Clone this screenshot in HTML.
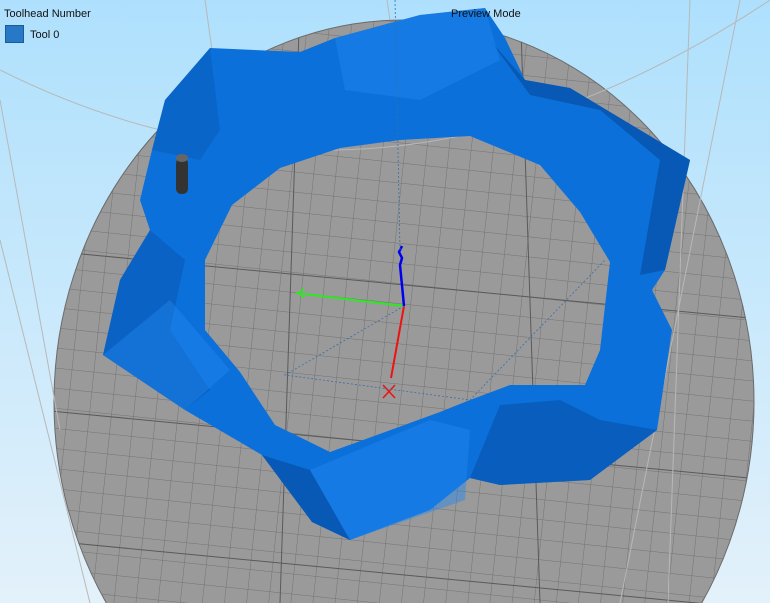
<!DOCTYPE html>
<html><head><style>
html,body{margin:0;padding:0;width:770px;height:603px;overflow:hidden}
body{background:linear-gradient(#aee0fd,#e3f1fa);font-family:"Liberation Sans",sans-serif;position:relative}
svg{display:block}
.t{position:absolute;font-size:11px;color:#111}
</style></head><body>
<svg width="770" height="603" style="position:absolute;left:0;top:0">
<defs>
<clipPath id="d"><ellipse cx="404" cy="402" rx="350" ry="382"/></clipPath>
<pattern id="g" width="22" height="20" patternUnits="userSpaceOnUse" patternTransform="rotate(6)">
<rect width="22" height="20" fill="#9a9a9a"/><path d="M0 0H22M0 0V20" stroke="#737373" stroke-width="1"/></pattern>
</defs>
<ellipse cx="404" cy="402" rx="350" ry="382" fill="url(#g)" stroke="#6a6a6a"/>
<g clip-path="url(#d)" stroke="#5a5a5a" stroke-width="1">
<path d="M40 250L770 320M40 410L770 480M40 540L770 610M300 0L280 603M520 0L540 603"/>
</g>
<g stroke="#b8b8b8" fill="none" stroke-width="1">
<path d="M0 70 Q380 260 770 0"/>
<path d="M205 0L212 50M387 0L390 20M690 0L668 603M740 0L620 603M0 240L90 603M0 100L60 430"/>
</g>
<path fill="#0c70da" fill-rule="evenodd" d="M165 100L210 48L300 52L335 38L420 15L485 8L505 38L525 80L570 88L690 160L665 270L652 290L672 330L657 430L590 480L500 485L470 478L430 510L350 540L312 522L262 455L185 410L103 355L120 280L150 230L140 200L152 150Z M232 205L280 168L340 148L400 140L470 136L540 165L580 212L610 262L600 350L585 385L510 385L470 400L440 412L330 452L275 425L240 372L205 330L205 260Z"/>
<g fill="#0859b5">
<path d="M490 40L525 80L570 88L690 160L665 270L640 275L660 160L600 110L530 95Z"/>
<path d="M103 355L120 280L150 230L185 260L170 330L210 390L185 410Z" opacity=".6"/>
<path d="M470 478L500 405L560 400L600 420L657 430L590 480L500 485Z" opacity=".8"/>
<path d="M262 455L310 470L350 540L312 522Z"/>
<path d="M165 100L210 48L220 130L200 160L152 150Z" opacity=".5"/>
</g>
<g fill="#2388f0" opacity=".45">
<path d="M335 38L420 15L485 8L500 60L420 100L345 90Z"/>
<path d="M310 470L430 420L470 430L465 500L350 540Z"/>
<path d="M103 355L170 300L230 370L185 410Z"/>
</g>
<rect x="176" y="158" width="12" height="36" rx="5" fill="#333"/>
<ellipse cx="182" cy="158" rx="6" ry="4" fill="#666"/>
<path d="M404 306L296 293" stroke="#2bea20" stroke-width="2"/>
<path d="M304 288L299 293L304 298" stroke="#2bea20" fill="none" stroke-width="1.5"/>
<path d="M404 306L400 265L402 258L399 252L402 246" stroke="#0000ee" stroke-width="2.5" fill="none"/>
<path d="M404 306L391 378" stroke="#ee1111" stroke-width="2"/>
<path d="M383 385L395 398M395 385L383 398" stroke="#ee1111" stroke-width="1.5"/>
<path d="M404 306L285 375L470 400L605 260M395 0L400 250" stroke="#3a6ea8" stroke-width="0.8" stroke-dasharray="2 2" fill="none"/>
</svg>
<div class="t" style="left:4px;top:8px">Toolhead Number</div>
<div style="position:absolute;left:5px;top:25px;width:17px;height:16px;background:#2878c8;border:1px solid #1d5a96"></div>
<div class="t" style="left:30px;top:29px">Tool 0</div>
<div class="t" style="left:451px;top:8px">Preview Mode</div>
</body></html>
